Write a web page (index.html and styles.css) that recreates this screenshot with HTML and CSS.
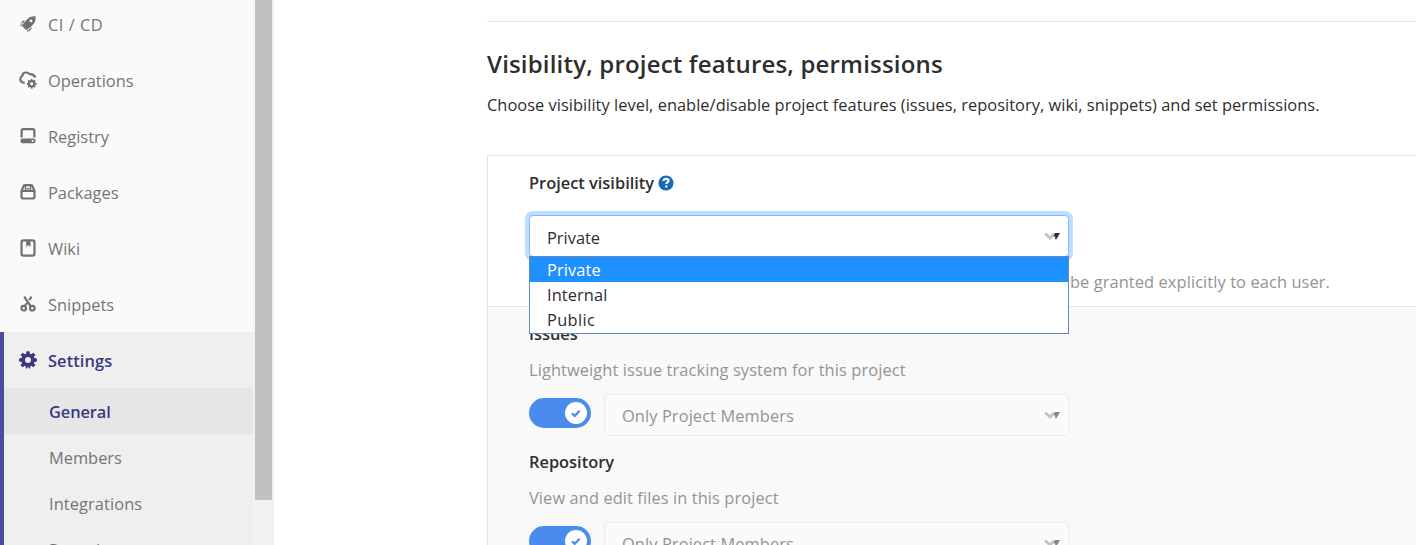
FILE: index.html
```html
<!DOCTYPE html>
<html lang="en">
<head>
<meta charset="utf-8">
<title>General settings</title>
<link rel="stylesheet" href="styles.css">
</head>
<body>
<div class="page">
  <aside class="sidebar">
    <nav class="nav">
      <a class="nav-item"><svg class="icon" viewBox="0 0 16 16"><path fill-rule="evenodd" d="M15.600.4C12 .1 9.300 1.100 7 3.400L4.600 6 2.600 8.600c-.5.9-.4 1.500.2 2.100l2.500 2.500c.6.600 1.200.7 2.100.2L10 11.400l2.600-2.400C14.900 6.700 15.900 4 15.600.4zM11 3.500a1.400 1.400 0 1 1 0 2.800 1.400 1.400 0 0 1 0-2.800z"/><path d="M5 4.300 3.200 4.600.6 7.500l2.500-.6zM11.700 11l-.3 2.100-2.700 2.600.5-2.700zM.1 9.400l1.400-1.300.9.900-1.400 1.300zM6.900 14.900l1.100-1.300.9.800-1.200 1.500z"/></svg><span class="cicd">CI / CD</span></a>
      <a class="nav-item"><svg class="icon ops" viewBox="0 0 18 18"><path class="line" d="M5.800 11.700C3.200 12 1.300 10.500 1.300 8.300c0-1.700.7-2.700 1.900-3.400C3.500 2.500 5.300 1.400 7.500 1.500c1.600.1 2.500.7 3.200 1.700 2.500-.4 4.300.7 5.700 3.300"/><g class="line"><circle cx="12.700" cy="12.800" r="2.700"/><path class="teeth" d="M12.700 8v2M12.700 15.600v2.200M7.900 12.800h2M15.500 12.800h2.200M9.300 9.400l1.500 1.500M14.600 14.700l1.500 1.500M9.300 16.200l1.500-1.500M14.600 10.900l1.500-1.500"/></g></svg><span>Operations</span></a>
      <a class="nav-item"><svg class="icon" viewBox="0 0 16 16"><path class="line" d="M1.600 9.500V3q0-1.900 1.900-1.900h9q1.900 0 1.900 1.900v6.500"/><path fill-rule="evenodd" d="M2.500 10.500h11q2 0 2 2v.8q0 2-2 2h-11q-2 0-2-2v-.8q0-2 2-2zm9.200 1.500v1.800h1.800V12z"/></svg><span>Registry</span></a>
      <a class="nav-item"><svg class="icon" viewBox="0 0 16 16"><path class="line" d="M1.500 7 3.200 2.800Q3.700 1.200 5 1.200h6q1.300 0 1.800 1.600L14.500 7v5.500q0 2-2 2h-9q-2 0-2-2zM1.500 7h13"/><path class="line thin" d="M5.500 1v5M10.500 1v5M6.800 4.800h2.400"/></svg><span>Packages</span></a>
      <a class="nav-item"><svg class="icon wiki" viewBox="0 0 16 18"><rect class="line" x="1.500" y="1.300" width="13" height="15.400" rx="2"/><path d="M6.200 1h4.300v7L8.300 6 6.200 8z"/></svg><span>Wiki</span></a>
      <a class="nav-item"><svg class="icon" viewBox="0 0 16 16"><g class="line"><circle cx="3.700" cy="12.200" r="2.300"/><circle cx="12.300" cy="12.200" r="2.300"/><path d="M4.200.7l6.600 9.700M11.500.7 9.300 4M6.900 7l-2 3"/></g></svg><span>Snippets</span></a>
      <div class="nav-group">
        <a class="nav-item current"><svg class="icon gear" viewBox="0 0 18 18"><path fill-rule="evenodd" d="M7.500.2h3l.5 2.500 1.100.5 2.300-1.500 2 2-1.500 2.200.5 1.200 2.500.4v3l-2.500.4-.5 1.200 1.500 2.200-2 2-2.200-1.500-.7.300-.5 2.400h-1L9 15.500l-1 2.100H6.900l-.4-2.500-.8-.3-2.200 1.500-2-2L3 12.100l-.4-1.200-2.500-.4v-3l2.500-.4.500-1.200-1.500-2.200 2-2 2.200 1.500 1.200-.5zM9 6a3 3 0 1 0 0 6 3 3 0 0 0 0-6z"/></svg><span class="settings">Settings</span></a>
        <a class="sub-item selected"><span>General</span></a>
        <a class="sub-item"><span>Members</span></a>
        <a class="sub-item"><span class="integrations">Integrations</span></a>
        <a class="sub-item"><span>Repository</span></a>
      </div>
    </nav>
    <div class="scrollbar"><div class="thumb"></div></div>
  </aside>
  <main class="content">
    <header class="section-head">
      <h1>Visibility, project features, permissions</h1>
      <p>Choose visibility level, enable/disable project features (issues, repository, wiki, snippets) and set permissions.</p>
    </header>
    <div class="panel">
      <section class="visibility">
        <div class="label-row"><span class="label">Project visibility</span><svg class="help" viewBox="0 0 16 16"><circle cx="8" cy="8" r="7.600"/><path d="M5.500 6.100C5.500 4.600 6.500 3.900 8 3.900s2.600.7 2.600 1.900C10.600 7.400 8.300 7.400 8.300 9"/><path d="M8.300 10.500v2"/></svg></div>
        <div class="picker">
          <div class="select focused"><span>Private</span><svg class="arrows" viewBox="0 0 16 9"><path class="chevron" d="M1.200 1.500 6 6l4.300-4.300"/><path class="tri" d="M10.800 1H16l-3.600 6.300h-1.200V4.500H9.500z"/></svg></div>
          <ul class="menu">
            <li class="active">Private</li>
            <li>Internal</li>
            <li class="public">Public</li>
          </ul>
        </div>
        <p class="hint">The project is accessible only by members of the project. Access must be granted explicitly to each user.</p>
      </section>
      <section class="features">
        <div class="feature">
          <div class="label">Issues</div>
          <p class="hint">Lightweight issue tracking system for this project</p>
          <div class="controls">
            <div class="toggle"><svg viewBox="0 0 22 22"><circle cx="11" cy="11" r="11"/><path d="m7 11.300 2.700 2.500 5-5"/></svg></div>
            <div class="select disabled"><span>Only Project Members</span><svg class="arrows" viewBox="0 0 16 9"><path class="chevron" d="M1.200 1.500 6 6l4.300-4.300"/><path class="tri" d="M10.800 1H16l-3.600 6.300h-1.200V4.500H9.500z"/></svg></div>
          </div>
        </div>
        <div class="feature">
          <div class="label">Repository</div>
          <p class="hint">View and edit files in this project</p>
          <div class="controls">
            <div class="toggle"><svg viewBox="0 0 22 22"><circle cx="11" cy="11" r="11"/><path d="m7 11.300 2.700 2.500 5-5"/></svg></div>
            <div class="select disabled"><span>Only Project Members</span><svg class="arrows" viewBox="0 0 16 9"><path class="chevron" d="M1.200 1.500 6 6l4.300-4.300"/><path class="tri" d="M10.800 1H16l-3.600 6.300h-1.200V4.500H9.500z"/></svg></div>
          </div>
        </div>
      </section>
    </div>
  </main>
</div>
</body>
</html>
```
FILE: styles.css
```css
* { box-sizing: border-box; }
body {
  margin: 0;
  height: 545px;
  overflow: hidden;
  background: #fff;
  color: #2e2e2e;
  font-family: "Open Sans", "Noto Sans", sans-serif;
  font-size: 16.400px;
}
h1, p, ul { margin: 0; padding: 0; }
.page { display: flex; height: 545px; overflow: hidden; }

/* Sidebar */
.sidebar { display: flex; flex: none; width: 274px; background: #fafafa; }
.nav { width: 253px; margin-top: -4px; color: #757575; }
.nav-item { display: flex; align-items: center; gap: 12px; height: 56px; padding-left: 20px; }
.cicd { letter-spacing: 0.500px; }
.icon { width: 16px; height: 16px; fill: #707070; }
.line { fill: none; stroke: #707070; stroke-width: 2.200; }
.thin { stroke-width: 1.500; }
.teeth { stroke-width: 1.700; }
.ops, .gear { width: 18px; height: 18px; margin: 0 -1px; }
.wiki { height: 18px; }
.gear { fill: #393982; }
.nav-group { border-left: 4px solid #4b4ba3; background: #efefef; }
.current { padding-left: 16px; color: #393982; font-weight: 600; }
.settings { letter-spacing: 0.100px; }
.sub-item { display: flex; align-items: center; height: 46px; padding: 0 0 0 45px; }
.selected { background: #e6e6e6; color: #393982; font-weight: 600; letter-spacing: -0.100px; }
.integrations { letter-spacing: 0.100px; }
.scrollbar { width: 21px; padding: 0 2px; background: #f1f1f1; }
.thumb { width: 17px; height: 500px; background: #c1c1c1; }

/* Settings section */
.content { flex: 1; min-width: 0; padding: 21px 0 0 213px; }
.section-head { height: 134px; border-top: 1px solid #e5e5e5; padding-top: 25px; }
.section-head h1 { font-size: 24px; font-weight: 600; line-height: 34px; letter-spacing: 0.180px; white-space: nowrap; }
.section-head p { padding-top: 11px; line-height: 26px; letter-spacing: 0.035px; white-space: nowrap; }
.panel { border: 1px solid #e5e5e5; border-right: 0; height: 420px; }
.visibility { height: 151px; padding: 13px 0 0 41px; border-bottom: 1px solid #e5e5e5; }
.label { font-weight: 600; line-height: 28px; }
.label-row { display: flex; align-items: center; gap: 4px; height: 28px; }
.help { width: 16px; height: 16px; fill: #1b69b6; }
.help path { fill: none; stroke: #fff; stroke-width: 2.100; }
.picker { position: relative; width: 540px; margin-top: 18px; }
.select {
  display: flex;
  align-items: center;
  justify-content: space-between;
  height: 42px;
  padding: 0 8px 0 17px;
  border: 1px solid #e5e5e5;
  border-radius: 4px;
  background: #fff;
}
.select span { padding-top: 2px; }
.focused { border-color: #80bdff; box-shadow: 0 0 0 4px #bfdeff; }
.arrows { width: 16px; height: 9px; margin-top: 1px; }
.chevron { fill: none; stroke: #c4c4c4; stroke-width: 2.700; }
.tri { fill: #2e2e2e; }
.menu {
  position: absolute;
  top: 41px;
  left: 0;
  z-index: 1;
  width: 540px;
  height: 78px;
  border: 1px solid #6488c0;
  background: #fff;
  list-style: none;
}
.menu li { height: 25px; padding-left: 17px; line-height: 26px; letter-spacing: 0.100px; }
.menu .public { letter-spacing: 0.350px; }
.menu .active { background: #1e90ff; color: #fff; }
.hint { color: #949494; line-height: 28px; letter-spacing: 0.098px; white-space: nowrap; }
.visibility .hint { margin-top: 11px; }
.features { height: 267px; padding: 13px 0 0 41px; background: #f9f9f9; }
.feature { height: 128px; }
.feature .hint { margin-top: 8px; }
.controls { display: flex; align-items: center; gap: 13px; width: 540px; margin-top: 10px; }
.toggle { display: flex; align-items: center; justify-content: flex-end; width: 62px; height: 30px; padding-right: 4px; margin-top: -4px; border-radius: 15px; background: #4a8bee; }
.toggle svg { width: 22px; height: 22px; fill: #fff; }
.toggle path { fill: none; stroke: #4a8bee; stroke-width: 2.300; }
.disabled { flex: 1; color: #949494; background: #fafafa; border-color: #ececec; letter-spacing: 0.100px; }
.disabled span { padding-top: 0; }
.disabled .arrows { margin-top: 0; }
.disabled .tri { fill: #858585; }
```
